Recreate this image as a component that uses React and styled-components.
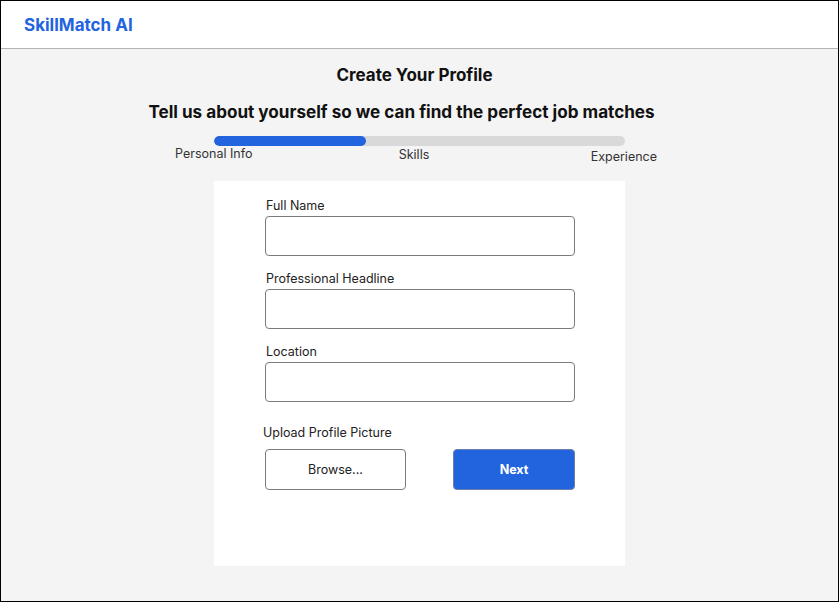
import React from "react"
import styled, { createGlobalStyle } from "styled-components"

const GlobalStyle = createGlobalStyle`
  html, body {
    margin: 0;
    padding: 0;
    font-family: Inter, "Noto Sans", sans-serif;
    color: #111;
  }
  * {
    box-sizing: border-box;
  }
`

const steps = [
  { name: "Personal Info", drop: 0, align: "left" },
  { name: "Skills", drop: 1, align: "center" },
  { name: "Experience", drop: 3, align: "right" },
]

const fields = ["Full Name", "Professional Headline", "Location"]

const App = () => {
  return (
    <Frame>
      <GlobalStyle />
      <Header>
        <Logo>SkillMatch AI</Logo>
      </Header>
      <Main>
        <Title>Create Your Profile</Title>
        <Subtitle>
          Tell us about yourself so we can find the perfect job matches
        </Subtitle>
        <Track>
          <Fill style={{ width: "37%" }} />
        </Track>
        <StepLabels>
          {steps.map(s => (
            <StepLabel key={s.name} $drop={s.drop} $align={s.align}>
              {s.name}
            </StepLabel>
          ))}
        </StepLabels>
        <Card>
          {fields.map(f => (
            <Field key={f}>
              <Label>{f}</Label>
              <Input type="text" />
            </Field>
          ))}
          <UploadLabel>Upload Profile Picture</UploadLabel>
          <ButtonRow>
            <BrowseButton>Browse...</BrowseButton>
            <NextButton>Next</NextButton>
          </ButtonRow>
        </Card>
      </Main>
    </Frame>
  )
}

export default App

export const Frame = styled.div`
  width: 839px;
  height: 602px;
  border: 1px solid #000;
  display: flex;
  flex-direction: column;
  background: #f4f4f4;
  overflow: hidden;
`

export const Header = styled.header`
  height: 48px;
  flex-shrink: 0;
  background: #fff;
  border-bottom: 1px solid #b3b3b3;
  display: flex;
  align-items: center;
  padding-left: 23px;
`

export const Logo = styled.div`
  color: #2264dd;
  font-weight: 700;
  font-size: 17px;
`

export const Main = styled.main`
  display: flex;
  flex-direction: column;
  align-items: center;
  padding-top: 15px;
`

export const Title = styled.h1`
  margin: 0 10px 0 0;
  font-size: 17px;
  line-height: 22px;
  font-weight: 700;
`

export const Subtitle = styled.h2`
  margin: 15px 36px 0 0;
  font-size: 17.1px;
  line-height: 22px;
  font-weight: 700;
`

export const Track = styled.div`
  margin-top: 13px;
  width: 411px;
  height: 10px;
  border-radius: 5px;
  background: #d9d9d9;
  overflow: hidden;
`

export const Fill = styled.div`
  height: 100%;
  background: #2264dd;
  border-radius: 5px;
`

export const StepLabels = styled.div`
  width: 482px;
  display: grid;
  grid-template-columns: 1fr 1fr 1fr;
  align-items: start;
  margin-right: 7px;
`

export const StepLabel = styled.span`
  font-size: 12.5px;
  line-height: 15px;
  color: #333;
  text-align: ${p => p.$align};
  margin-top: ${p => p.$drop}px;
  margin-right: ${p => (p.$align === "center" ? "4px" : "0")};
`

export const Card = styled.section`
  margin-top: 17px;
  width: 411px;
  height: 385px;
  background: #fff;
  padding: 17px 50px 0 51px;
  display: flex;
  flex-direction: column;
`

export const Field = styled.div`
  display: flex;
  flex-direction: column;
  margin-bottom: 15px;
`

export const Label = styled.label`
  font-size: 12.5px;
  line-height: 15px;
  color: #222;
  margin: 0 0 3px 1px;
`

export const Input = styled.input`
  width: 310px;
  height: 40px;
  border: 1px solid #7b7b7b;
  border-radius: 4px;
  background: #fff;
  font-family: inherit;
  outline: none;
`

export const UploadLabel = styled.div`
  font-size: 12.5px;
  line-height: 15px;
  color: #222;
  margin: 8px 0 0 -2px;
`

export const ButtonRow = styled.div`
  width: 310px;
  display: flex;
  justify-content: space-between;
  margin-top: 9px;
`

export const BrowseButton = styled.button`
  width: 141px;
  height: 41px;
  border: 1px solid #7b7b7b;
  border-radius: 4px;
  background: #fff;
  font-family: inherit;
  font-size: 12.5px;
  color: #222;
`

export const NextButton = styled.button`
  width: 122px;
  height: 41px;
  border: 1px solid #6d7fa8;
  border-radius: 4px;
  background: #2264dd;
  font-family: inherit;
  font-size: 12.5px;
  font-weight: 700;
  color: #fff;
`
